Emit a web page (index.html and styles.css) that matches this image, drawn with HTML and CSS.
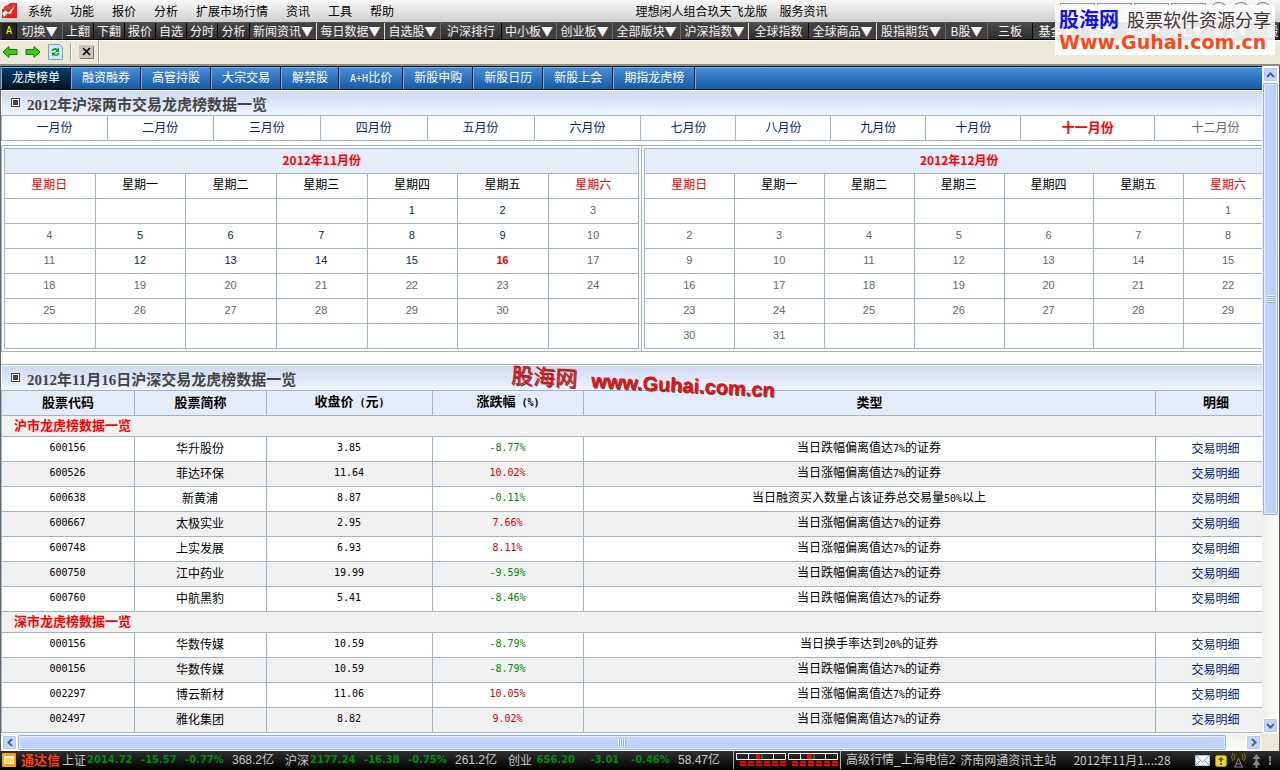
FILE: index.html
```html
<!DOCTYPE html>
<html lang="zh-CN">
<head>
<meta charset="utf-8">
<title>理想闲人组合玖天飞龙版</title>
<link rel="stylesheet" href="styles.css">
</head>
<body>
<div class="app">
  <header class="menubar">
    <svg class="logo" viewBox="0 0 16 16"><rect width="16" height="16" fill="#e8201c"/><path d="M0 0h9L5 3 3 5 0 7z" fill="#fbe9e6"/><path d="M2 4l4-2 2 2 6-4h2L9 8 6 6 2 9z" fill="#d8433c"/><path d="M0 11l4-3 3 2 7-7-5 9-3-1-4 4z" fill="#fff"/></svg>
    <nav class="menu">
      <button>系统</button><button>功能</button><button>报价</button><button>分析</button><button>扩展市场行情</button><button>资讯</button><button>工具</button><button>帮助</button>
    </nav>
    <div class="caption"><span>理想闲人组合玖天飞龙版</span><span>服务资讯</span></div>
    <div class="winbtns"><span>行情</span><span>资讯</span><span>交易</span><span>服务</span><i></i><i></i><i></i></div>
  </header>

  <div class="toolbar">
    <button class="key">A</button><button class="drop">切换▼</button><button>上翻</button><button>下翻</button><button>报价</button><button>自选</button><button>分时</button><button>分析</button><button class="drop light">新闻资讯▼</button><button class="drop light">每日数据▼</button><button class="drop">自选股▼</button><button>沪深排行</button><button class="drop">中小板▼</button><button class="drop">创业板▼</button><button class="drop">全部版块▼</button><button class="drop light">沪深指数▼</button><button>全球指数</button><button class="drop light">全球商品▼</button><button class="drop">股指期货▼</button><button class="drop">B股▼</button><button>三板</button><button class="drop">基金▼</button><button>债券</button><button class="drop">港股▼</button><button class="drop">外汇▼</button><button class="drop">黄金▼</button><button>美股</button>
  </div>

  <div class="browserbar">
    <button aria-label="后退"><svg width="16" height="14" viewBox="0 0 16 14"><path d="M1 7l6-5.500v3h8v5H7v3z" fill="#3ecb12" stroke="#137a06"/></svg></button>
    <button aria-label="前进"><svg width="16" height="14" viewBox="0 0 16 14"><path d="M15 7L9 1.500v3H1v5h8v3z" fill="#3ecb12" stroke="#137a06"/></svg></button>
    <button aria-label="刷新"><svg width="15" height="16" viewBox="0 0 15 16"><path d="M.5.500h11l3 3v12H.5z" fill="#d4e4fb" stroke="#7d9ccc"/><path d="M3.500 7c.5-3 4-4 6-2l1.500-1.500V8H7l1.500-1.500C7 5.500 5.500 6 5.500 7zM11.500 9c-.5 3-4 4-6 2L4 12.500V8.500h4L6.500 10c1.500 1 3 .5 3-1z" fill="#159a2c"/></svg></button>
    <span class="divider"></span>
    <button class="close" aria-label="关闭"><svg width="9" height="9" viewBox="0 0 9 9"><path d="M1 1l7 7M8 1L1 8" stroke="#000" stroke-width="1.600"/></svg></button>
    <span class="divider tall"></span>
  </div>

  <div class="viewport">
    <main class="pane">
      <nav class="tabs">
        <a class="on" href="#">龙虎榜单</a><a href="#">融资融券</a><a href="#">高管持股</a><a href="#">大宗交易</a><a href="#">解禁股</a><a href="#"><span class="num">A+H</span>比价</a><a href="#">新股申购</a><a href="#">新股日历</a><a href="#">新股上会</a><a href="#">期指龙虎榜</a>
      </nav>
      <div class="page">
        <h2 class="title"><i class="bullet"></i>2012年沪深两市交易龙虎榜数据一览</h2>
        <nav class="months">
          <a href="#">一月份</a><a href="#">二月份</a><a href="#">三月份</a><a href="#">四月份</a><a href="#">五月份</a><a href="#">六月份</a><a href="#">七月份</a><a href="#">八月份</a><a href="#">九月份</a><a href="#">十月份</a><a class="now" href="#">十一月份</a><span>十二月份</span>
        </nav>
        <div class="calendars">
          <div class="cal-cell">
            <table class="cal">
              <tr><th colspan="7">2012年11月份</th></tr>
              <tr class="week"><td class="red">星期日</td><td>星期一</td><td>星期二</td><td>星期三</td><td>星期四</td><td>星期五</td><td class="red">星期六</td></tr>
              <tr><td></td><td></td><td></td><td></td><td><a href="#">1</a></td><td><a href="#">2</a></td><td>3</td></tr>
              <tr><td>4</td><td><a href="#">5</a></td><td><a href="#">6</a></td><td><a href="#">7</a></td><td><a href="#">8</a></td><td><a href="#">9</a></td><td>10</td></tr>
              <tr><td>11</td><td><a href="#">12</a></td><td><a href="#">13</a></td><td><a href="#">14</a></td><td><a href="#">15</a></td><td><a class="today" href="#">16</a></td><td>17</td></tr>
              <tr><td>18</td><td>19</td><td>20</td><td>21</td><td>22</td><td>23</td><td>24</td></tr>
              <tr><td>25</td><td>26</td><td>27</td><td>28</td><td>29</td><td>30</td><td></td></tr>
              <tr><td></td><td></td><td></td><td></td><td></td><td></td><td></td></tr>
            </table>
          </div>
          <div class="cal-cell">
            <table class="cal">
              <tr><th colspan="7">2012年12月份</th></tr>
              <tr class="week"><td class="red">星期日</td><td>星期一</td><td>星期二</td><td>星期三</td><td>星期四</td><td>星期五</td><td class="red">星期六</td></tr>
              <tr><td></td><td></td><td></td><td></td><td></td><td></td><td>1</td></tr>
              <tr><td>2</td><td>3</td><td>4</td><td>5</td><td>6</td><td>7</td><td>8</td></tr>
              <tr><td>9</td><td>10</td><td>11</td><td>12</td><td>13</td><td>14</td><td>15</td></tr>
              <tr><td>16</td><td>17</td><td>18</td><td>19</td><td>20</td><td>21</td><td>22</td></tr>
              <tr><td>23</td><td>24</td><td>25</td><td>26</td><td>27</td><td>28</td><td>29</td></tr>
              <tr><td>30</td><td>31</td><td></td><td></td><td></td><td></td><td></td></tr>
            </table>
          </div>
        </div>

        <section class="board">
          <h2 class="title"><i class="bullet"></i>2012年11月16日沪深交易龙虎榜数据一览</h2>
          <div class="stamp"><b>股海网</b><span>www.Guhai.com.cn</span></div>
          <table class="list">
            <colgroup><col class="c1"><col class="c2"><col class="c3"><col class="c4"><col class="c5"><col class="c6"></colgroup>
            <thead><tr><th>股票代码</th><th>股票简称</th><th>收盘价<span class="num"> (</span>元<span class="num">)</span></th><th>涨跌幅<span class="num"> (%)</span></th><th>类型</th><th>明细</th></tr></thead>
            <tbody>
              <tr class="group"><th colspan="6">沪市龙虎榜数据一览</th></tr>
              <tr><td class="num">600156</td><td>华升股份</td><td class="num">3.85</td><td class="num down">-8.77%</td><td>当日跌幅偏离值达<span class="num">7%</span>的证券</td><td><a href="#">交易明细</a></td></tr>
              <tr class="alt"><td class="num">600526</td><td>菲达环保</td><td class="num">11.64</td><td class="num up">10.02%</td><td>当日涨幅偏离值达<span class="num">7%</span>的证券</td><td><a href="#">交易明细</a></td></tr>
              <tr><td class="num">600638</td><td>新黄浦</td><td class="num">8.87</td><td class="num down">-0.11%</td><td>当日融资买入数量占该证券总交易量<span class="num">50%</span>以上</td><td><a href="#">交易明细</a></td></tr>
              <tr class="alt"><td class="num">600667</td><td>太极实业</td><td class="num">2.95</td><td class="num up">7.66%</td><td>当日涨幅偏离值达<span class="num">7%</span>的证券</td><td><a href="#">交易明细</a></td></tr>
              <tr><td class="num">600748</td><td>上实发展</td><td class="num">6.93</td><td class="num up">8.11%</td><td>当日涨幅偏离值达<span class="num">7%</span>的证券</td><td><a href="#">交易明细</a></td></tr>
              <tr class="alt"><td class="num">600750</td><td>江中药业</td><td class="num">19.99</td><td class="num down">-9.59%</td><td>当日跌幅偏离值达<span class="num">7%</span>的证券</td><td><a href="#">交易明细</a></td></tr>
              <tr><td class="num">600760</td><td>中航黑豹</td><td class="num">5.41</td><td class="num down">-8.46%</td><td>当日跌幅偏离值达<span class="num">7%</span>的证券</td><td><a href="#">交易明细</a></td></tr>
              <tr class="group"><th colspan="6">深市龙虎榜数据一览</th></tr>
              <tr><td class="num">000156</td><td>华数传媒</td><td class="num">10.59</td><td class="num down">-8.79%</td><td>当日换手率达到<span class="num">20%</span>的证券</td><td><a href="#">交易明细</a></td></tr>
              <tr class="alt"><td class="num">000156</td><td>华数传媒</td><td class="num">10.59</td><td class="num down">-8.79%</td><td>当日跌幅偏离值达<span class="num">7%</span>的证券</td><td><a href="#">交易明细</a></td></tr>
              <tr><td class="num">002297</td><td>博云新材</td><td class="num">11.06</td><td class="num up">10.05%</td><td>当日涨幅偏离值达<span class="num">7%</span>的证券</td><td><a href="#">交易明细</a></td></tr>
              <tr class="alt"><td class="num">002497</td><td>雅化集团</td><td class="num">8.82</td><td class="num up">9.02%</td><td>当日涨幅偏离值达<span class="num">7%</span>的证券</td><td><a href="#">交易明细</a></td></tr>
            </tbody>
          </table>
        </section>
      </div>
    </main>
    <div class="vscroll">
      <button aria-label="向上"><svg width="9" height="6" viewBox="0 0 9 6"><path d="M1 5l3.500-3.500L8 5" fill="none" stroke="#4d6185" stroke-width="2"/></svg></button>
      <div class="thumb"><i></i></div>
      <div class="rest"></div>
      <button aria-label="向下"><svg width="9" height="6" viewBox="0 0 9 6"><path d="M1 1l3.500 3.500L8 1" fill="none" stroke="#4d6185" stroke-width="2"/></svg></button>
    </div>
    <div class="hscroll">
      <button aria-label="向左"><svg width="6" height="9" viewBox="0 0 6 9"><path d="M5 1L1.500 4.500 5 8" fill="none" stroke="#4d6185" stroke-width="2"/></svg></button>
      <div class="thumb"><i></i></div>
      <div class="rest"></div>
      <button aria-label="向右"><svg width="6" height="9" viewBox="0 0 6 9"><path d="M1 1l3.500 3.500L1 8" fill="none" stroke="#4d6185" stroke-width="2"/></svg></button>
    </div>
    <div class="corner"></div>
  </div>

  <footer class="status">
    <svg class="tdx" width="14" height="14" viewBox="0 0 14 14"><rect width="14" height="14" rx="1" fill="#f5a31a"/><rect x="2.500" y="3.500" width="9" height="7" fill="#ffd56e" stroke="#fff3cf"/><path d="M2 3h10v2H2z" fill="#fff3cf"/></svg>
    <b class="brand">通达信</b>
    <div class="quote"><span>上证</span><b>2014.72</b><b>-15.57</b><b>-0.77%</b><span>368.2亿</span></div>
    <div class="quote"><span>沪深</span><b>2177.24</b><b>-16.38</b><b>-0.75%</b><span>261.2亿</span></div>
    <div class="quote"><span>创业</span><b>&nbsp;656.20</b><b>&nbsp;-3.01</b><b>-0.46%</b><span>58.47亿</span></div>
    <div class="meters">
      <svg width="102" height="14" viewBox="0 0 102 14"><g fill="none" stroke="#fff"><path d="M.5.500h49v6H.5zM12.500.500v6M37.500.500v6M52.500.500h49v6h-49zM64.500.500v6M89.500.500v6"/></g><path d="M20 1h4v5h-4zM71 1h5v5h-5z" fill="#f00"/><path d="M25 1h2v5h-2zM77 1h2v5h-2z" fill="#080"/><path d="M4 9h46M4 12h46M56 9h46M56 12h46" stroke="#f00" stroke-width="2" stroke-dasharray="6 2"/></svg>
    </div>
    <span class="server">高级行情_上海电信2</span>
    <span class="host">济南网通资讯主站</span>
    <span class="clock">2012年11月1...:28</span>
    <svg class="tray" width="80" height="16" viewBox="0 0 80 16"><path d="M.5 3.500h14v10H.5z" fill="#f4f8fc" stroke="#a9c3dd"/><path d="M1 4l6.500 6L14 4M1 13l5-5M14 13L9 8" fill="none" stroke="#7ea0c4"/><rect x="20.500" y="3.500" width="11" height="11" rx="2" fill="#e8d820" stroke="#a39400"/><path d="M26 5l-3 3h2v2h2V8h2zM25 11h2v2h-2z" fill="#5c5400"/><g fill="none" stroke="#888"><path d="M43.500 6l-3.500 9M43.500 6l3.500 9M41 12h5M39 15h9"/><path d="M40 2q-2 3 0 6M47 2q2 3 0 6M38 1q-3 4 0 8M49 1q3 4 0 8" stroke="#8a7c10"/></g><path d="M61.500 2l4 5h-3v2l3 4h-3v3h-2v-3h-3l3-4V7h-3z" fill="#888"/><path d="M74 4h2v5h-2zM74 10h2v3h-2z" fill="#888"/></svg>
  </footer>

  <div class="watermark">
    <div class="wm-top"><b>股海网</b><span>股票软件资源分享</span></div>
    <div class="wm-url">Www.Guhai.com.cn</div>
  </div>
</div>
</body>
</html>
```

FILE: styles.css
```css
* { box-sizing: border-box; }

body {
  margin: 0;
  font: 12px/16px "Noto Sans CJK SC", sans-serif;
  color: #000;
}

a { color: #002288; text-decoration: none; }

button {
  margin: 0;
  padding: 0;
  border: 0;
  background: none;
  font: inherit;
  color: inherit;
  white-space: nowrap;
}

svg { display: block; flex: none; }

.num { font-family: "DejaVu Sans Mono", monospace; font-size: 10px; }

.app {
  position: relative;
  display: flex;
  flex-direction: column;
  height: 100vh;
  overflow: hidden;
  background: #ece9d8;
}

/* menu bar */
.menubar {
  display: flex;
  align-items: center;
  flex: none;
  height: 23px;
  padding: 0 8px 1px 2px;
  background: linear-gradient(#f8f8f8, #cfcfcf);
  border-bottom: 1px solid #55534c;
}
.logo { width: 15px; height: 15px; margin-right: 11px; }
.menu { display: flex; gap: 18px; }
.caption { display: flex; gap: 12px; margin-left: 19%; flex: 1; white-space: nowrap; }
.winbtns { display: flex; gap: 2px; align-items: center; color: #aaa; }
.winbtns span { width: 35px; height: 16px; border: 1px solid #999; text-align: center; line-height: 14px; }
.winbtns i { width: 18px; height: 18px; margin-left: 2px; border: 1px solid #777; border-radius: 50%; }

/* shortcut bar */
.toolbar {
  display: grid;
  grid-template-columns: 15px 46px 31px 31px 31px 31px 31px 32px 67px 68px 56px 61px 55px 56px 68px 68px 60px 68px 69px 42px 45px 48px 41px 43px 43px 46px 1fr;
  flex: none;
  height: 18px;
  padding-left: 2px;
  overflow: hidden;
  background: #333;
  border-bottom: 1px solid #fff;
  color: #f4f4f4;
}
.toolbar button {
  height: 17px;
  line-height: 16px;
  overflow: hidden;
  background: linear-gradient(#4b4b4b, #2c2c2c);
  border-right: 1px solid #050505;
  border-bottom: 1px solid #000;
}
.toolbar .drop { background: #414141; border-right-color: #6d6a60; }
.toolbar .light { border-right-color: #e8e4d0; }
.toolbar .key { background: #222; color: #ff0; font: 10px/16px "DejaVu Sans Mono", monospace; }

/* browser buttons */
.browserbar {
  display: flex;
  align-items: center;
  flex: none;
  height: 25px;
  padding: 0 0 2px 2px;
  gap: 7px;
  border-bottom: 2px solid #8f8c7e;
}
.browserbar .divider { width: 2px; height: 18px; border-left: 1px solid #aca899; border-right: 1px solid #fff; }
.browserbar .tall { height: 23px; margin-left: -2px; }
.browserbar .close {
  display: grid;
  place-items: center;
  width: 14px;
  height: 13px;
  background: #c8c5bb;
  box-shadow: 1px 1px 0 #777;
}

/* page viewport with its scroll bars */
.viewport {
  display: grid;
  grid-template: minmax(0, 1fr) 17px / minmax(0, 1fr) 17px;
  flex: 1;
  min-height: 0;
  border-left: 1px solid #666;
  border-right: 1px solid #555;
}
.pane { overflow: hidden; background: #fff; }
.page { width: calc(100% + 15px); }

.tabs {
  display: flex;
  height: 24px;
  background: linear-gradient(#4a8fdb, #165ba5);
  border-top: 1px solid #0c1a2a;
  border-bottom: 1px solid #061526;
}
.tabs a {
  padding: 0 10px;
  border-left: 1px solid #6fb4e8;
  border-right: 1px solid #06182c;
  box-shadow: inset 0 1px 0 #6fb4e8;
  color: #fff;
  line-height: 20px;
}
.tabs .on { background: linear-gradient(#004070, #001322); }
.tabs::after { content: ""; flex: 1; border-left: 1px solid #6fb4e8; box-shadow: inset 0 1px 0 #6fb4e8; }

.title {
  display: flex;
  align-items: center;
  height: 25px;
  margin: 0;
  padding: 4px 0 0 9px;
  gap: 7px;
  border: 1px solid #fff;
  border-width: 1px 1px 0;
  background: linear-gradient(#cfd9ef, #e0e7fa 55%, #f2f5ff);
  color: #444;
  font: bold 15px/20px "Liberation Serif", "Noto Sans CJK SC", serif;
}
.bullet {
  width: 9px;
  height: 9px;
  margin-top: -6px;
  border: 1px solid #444;
  background: #444;
  box-shadow: inset 0 0 0 1px #fff;
}

.months {
  display: grid;
  grid-template-columns: 106fr 106fr 107fr 107fr 107fr 107fr 95fr 95fr 95fr 95fr 134fr 122fr;
  height: 26px;
  border: 1px solid #a0b4c8;
  border-right: 0;
  line-height: 22px;
  text-align: center;
  color: #666;
}
.months > * { border-right: 1px solid #a0b4c8; }
.months .now { color: #f00; font-size: 13px; font-weight: bold; }

.calendars {
  display: grid;
  grid-template-columns: 641fr 636fr;
  margin-top: 4px;
  border: 1px solid #a0b4c8;
}
.cal-cell { padding: 2px; }
.cal-cell + .cal-cell { border-left: 1px solid #a0b4c8; }

table { width: 100%; table-layout: fixed; border-collapse: collapse; }
td, th { height: 25px; padding: 0 0 3px; border: 1px solid #a0b4c8; text-align: center; }
.cal { color: #666; font-size: 11px; }
.cal td { padding: 0 1px 2px 0; font-family: "Liberation Sans", "Noto Sans CJK SC", sans-serif; }
.cal th { background: #e4ebf9; color: #f00; font-size: 12px; }
.cal .week td { color: #000; font-size: 12px; }
.cal .week .red { color: #f00; }
.cal .today { color: #f00; font-weight: bold; }

/* ranking table */
.board { position: relative; margin-top: 12px; border-top: 1px solid #a0b4c8; }
.list .c1 { width: 133px; }
.list .c2 { width: 132px; }
.list .c3 { width: 166px; }
.list .c4 { width: 151px; }
.list .c6 { width: 121px; }
.list td { padding-right: 1px; }
.list thead th { background: #e4ebf9; font-size: 13px; }
.list .alt { background: #f1f1f1; }
.list .group th { height: 21px; padding: 0 0 3px 12px; background: #f1f1f1; color: #f00; font-size: 13px; text-align: left; }
.list .up { color: #d90000; }
.list .down { color: #008800; }

.stamp {
  position: absolute;
  top: 0;
  left: 510px;
  display: flex;
  gap: 14px;
  color: #e81010;
  text-shadow: 1px 1px 0 #544;
  transform: rotate(3deg);
}
.stamp b { font-size: 22px; line-height: 30px; font-weight: normal; }
.stamp span { font: bold 20px/36px "Liberation Sans", sans-serif; }

/* scroll bars */
.vscroll, .hscroll { display: flex; padding: 1px; gap: 1px; background: linear-gradient(90deg, #f0efe6, #fdfdfb); }
.vscroll { flex-direction: column; }
.hscroll { background: linear-gradient(#f0efe6, #fdfdfb); }
.vscroll button, .hscroll button {
  display: grid;
  place-items: center;
  flex: none;
  width: 15px;
  height: 15px;
  border: 1px solid #fff;
  border-radius: 2px;
  box-shadow: inset 0 0 0 1px #b4c8f6;
  background: #c6d5fd;
}
.thumb {
  display: grid;
  place-items: center;
  border: 1px solid #98b0e4;
  border-radius: 2px;
  box-shadow: inset 0 0 0 1px #e4ecff;
  background: linear-gradient(90deg, #c9d8fd, #b9cdf8);
}
.hscroll .thumb { background: linear-gradient(#c9d8fd, #b9cdf8); flex: 1208; }
.hscroll .rest { flex: 18; }
.vscroll .thumb { flex: 431; }
.vscroll .rest { flex: 202; }
.thumb i { width: 8px; height: 8px; background: repeating-linear-gradient(#eef4fe 0 1px, #8cb0f8 1px 2px); }
.hscroll .thumb i { background: repeating-linear-gradient(90deg, #eef4fe 0 1px, #8cb0f8 1px 2px); }
.corner { background: #ece9d8; }

/* status bar */
.status {
  display: flex;
  align-items: center;
  flex: none;
  height: 19px;
  padding: 0 5px 1px 2px;
  background: linear-gradient(#303030, #000);
  color: #c8c8c8;
  white-space: nowrap;
}
.tdx { margin-right: 5px; }
.brand { width: 41px; color: #ff4010; font-size: 13px; }
.quote { display: grid; grid-template-columns: 25px 54px 44px 47px 53px; align-items: center; }
.quote b { color: #008a10; font: bold 10px/16px "DejaVu Sans", sans-serif; }
.quote span:last-child, .server { font-family: "Liberation Sans", "Noto Sans CJK SC", sans-serif; }
.meters { padding: 2px; border: 1px solid #aaa; border-width: 0 1px; margin: 0 5px 0 2px; height: 18px; }
.server { margin-right: 5px; }
.clock { margin: 0 auto 0 17px; }

/* corner mark over the window frame */
.watermark {
  position: absolute;
  top: 5px;
  right: 5px;
  width: 220px;
  height: 50px;
  padding: 0 4px;
  background: rgba(255, 255, 255, .88);
}
.wm-top { display: flex; align-items: center; justify-content: space-between; height: 27px; }
.wm-top b { color: #1010f0; font-size: 20px; }
.wm-top span { color: #433; font-size: 18px; }
.wm-url { color: #ff4818; font: bold 19px/20px "DejaVu Sans", sans-serif; }
```
